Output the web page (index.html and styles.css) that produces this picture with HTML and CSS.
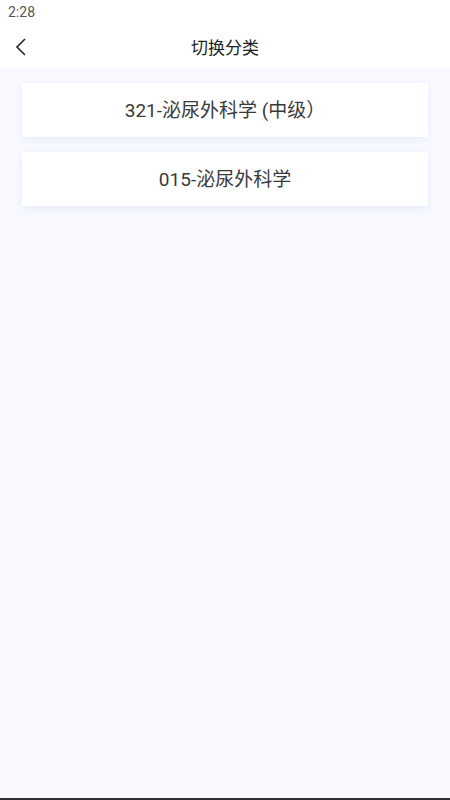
FILE: index.html
```html
<!DOCTYPE html>
<html lang="zh">
<head>
    <meta charset="UTF-8">
    <meta name="viewport" content="width=device-width, initial-scale=1.0">
    <title>切换分类</title>
    <link rel="stylesheet" href="styles.css">
</head>
<body>
    <div class="status-bar">2:28</div>
    <header class="nav-bar">
        <span class="back">
            <svg width="12" height="18" viewBox="0 0 12 18"><path d="M10 1 L2 9 L10 17" fill="none" stroke="#222" stroke-width="1.6"/></svg>
        </span>
        <h1>切换分类</h1>
    </header>
    <main class="category-list">
        <div class="category-item">321-泌尿外科学 (中级）</div>
        <div class="category-item">015-泌尿外科学</div>
    </main>
</body>
</html>
```

FILE: styles.css
```css
body, h1 {
    margin: 0;
    padding: 0;
}

body {
    font-family: Roboto, "Noto Sans CJK SC", sans-serif;
    background-color: #f8faff;
    color: #333;
    height: 800px;
    box-sizing: border-box;
    border-bottom: 2px solid #333;
}

.status-bar {
    height: 24px;
    line-height: 25px;
    padding-left: 8px;
    font-size: 14px;
    color: #555;
    background-color: #fff;
}

.nav-bar {
    position: relative;
    height: 44px;
    display: flex;
    align-items: center;
    justify-content: center;
    background-color: #fff;
}

.nav-bar h1 {
    font-size: 17px;
    font-weight: normal;
    color: #222;
}

.back {
    position: absolute;
    left: 15px;
    top: 14px;
}

.category-list {
    display: flex;
    flex-direction: column;
    gap: 15px;
    padding: 15px 22px;
}

.category-item {
    height: 54px;
    box-sizing: border-box;
    padding-bottom: 4px;
    display: flex;
    align-items: center;
    justify-content: center;
    background-color: #fff;
    font-size: 19px;
    color: #3a3a3a;
    box-shadow: 0 2px 8px rgba(190, 205, 235, 0.35);
}
```
